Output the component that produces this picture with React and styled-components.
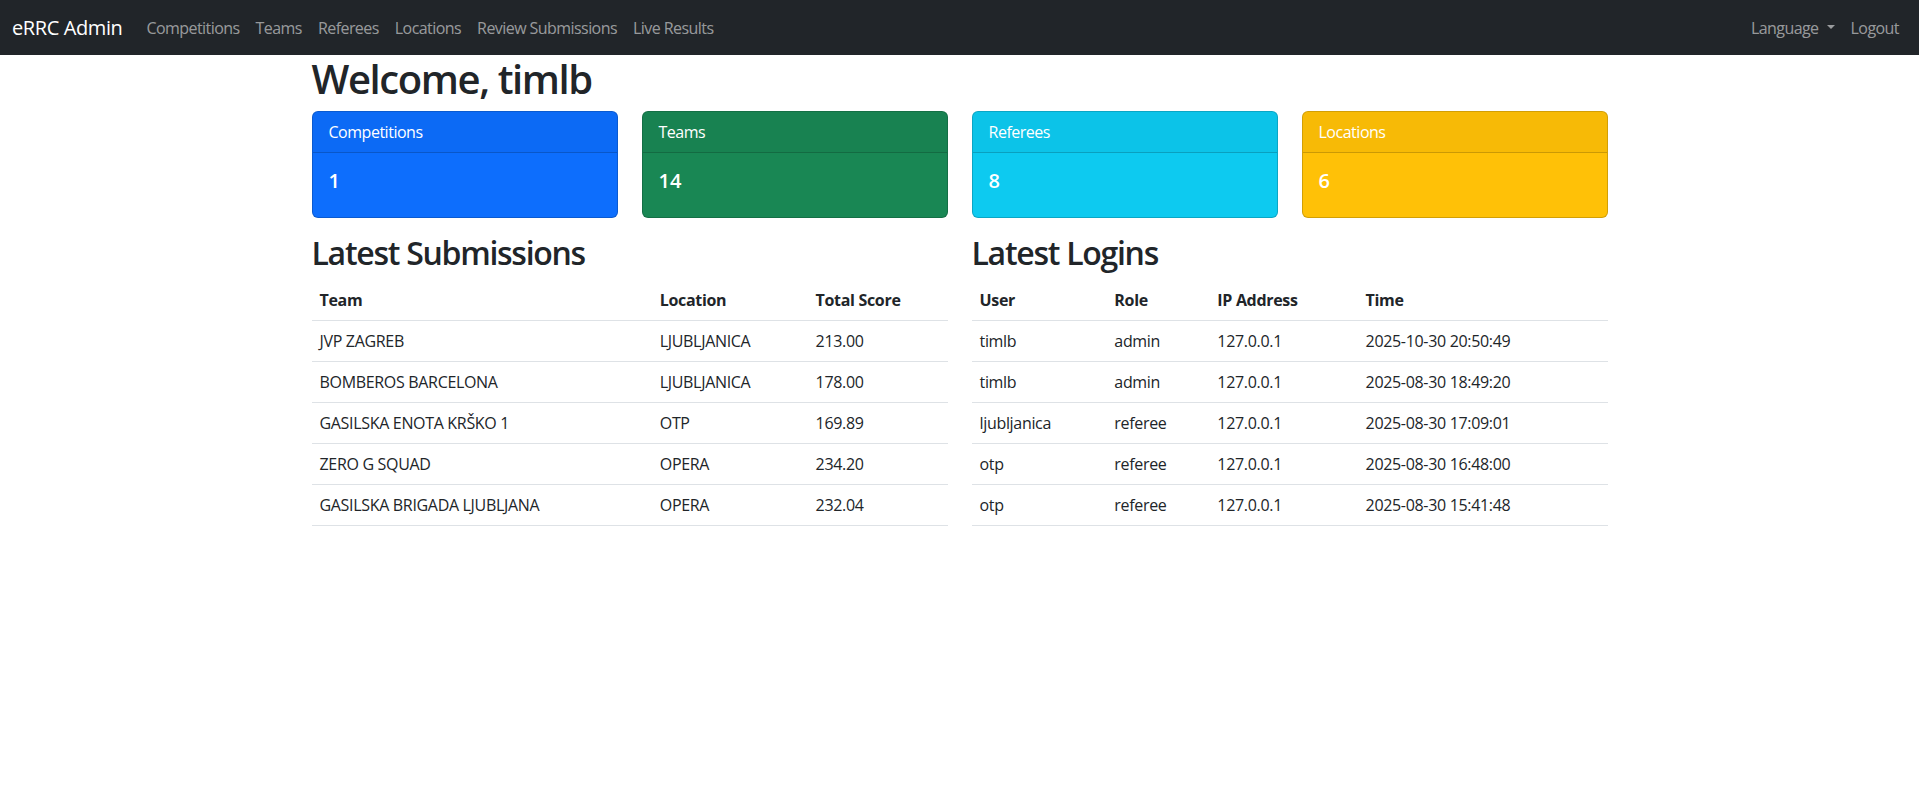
import React from 'react';
import styled, { createGlobalStyle } from 'styled-components';

const GlobalStyle = createGlobalStyle`
  *, *::before, *::after {
    box-sizing: border-box;
  }
  body {
    margin: 0;
    font-family: "Segoe UI", "Open Sans", "Noto Sans", sans-serif;
    font-size: 16px;
    line-height: 1.5;
    color: #212529;
    background: #fff;
  }
`

const Navbar = styled.nav`
  display: flex;
  align-items: center;
  justify-content: space-between;
  height: 55px;
  padding: 0 12px;
  background-color: #212529;
  letter-spacing: -0.035em;
`

const NavGroup = styled.div`
  display: flex;
  align-items: center;
`

const Brand = styled.a`
  font-size: 20px;
  line-height: 30px;
  color: #fff;
  margin-right: 16px;
  letter-spacing: -0.02em;
  text-decoration: none;
  cursor: pointer;
`

const NavLink = styled.a`
  padding: 8px;
  color: rgba(255, 255, 255, 0.55);
  text-decoration: none;
  cursor: pointer;

  &:hover {
    color: rgba(255, 255, 255, 0.75);
  }
`

const Dropdown = styled(NavLink)`
  &::after {
    content: '';
    display: inline-block;
    margin-left: 8px;
    vertical-align: 0.255em;
    border-top: 0.3em solid;
    border-right: 0.3em solid transparent;
    border-left: 0.3em solid transparent;
  }
`

const Container = styled.main`
  max-width: 1320px;
  margin: 0 auto;
  padding: 0 12px;
`

const Title = styled.h1`
  font-size: 40px;
  font-weight: 600;
  line-height: 1.2;
  letter-spacing: -0.035em;
  margin: 0 0 8px;
`

const CardRow = styled.div`
  display: grid;
  grid-template-columns: repeat(4, 1fr);
  gap: 24px;
`

const StatCard = styled.div`
  border: 1px solid rgba(0, 0, 0, 0.175);
  border-radius: 6px;
  background-color: ${p => p.$bg};
  color: #fff;
  overflow: hidden;
`

const CardHeader = styled.div`
  padding: 8px 16px;
  background-color: rgba(0, 0, 0, 0.03);
  border-bottom: 1px solid rgba(0, 0, 0, 0.175);
  letter-spacing: -0.03em;
`

const CardBody = styled.div`
  padding: 16px;
`

const Count = styled.h5`
  font-size: 20px;
  font-weight: 600;
  line-height: 1.2;
  margin: 0 0 8px;
`

const TableRow = styled.div`
  display: grid;
  grid-template-columns: 1fr 1fr;
  gap: 24px;
  margin-top: 16px;
`

const SectionTitle = styled.h2`
  font-size: 32px;
  font-weight: 600;
  line-height: 1.2;
  letter-spacing: -0.04em;
  margin: 0 0 8px;
`

const Table = styled.table`
  width: 100%;
  border-collapse: collapse;
  margin-bottom: 16px;
  letter-spacing: -0.02em;

  th, td {
    padding: 8px;
    text-align: left;
    border-bottom: 1px solid #dee2e6;
  }

  th {
    font-weight: 700;
  }
`

const Col = styled.th`
  width: ${p => p.$w};
`

const stats = [
  { label: 'Competitions', value: 1, bg: '#0d6efd' },
  { label: 'Teams', value: 14, bg: '#198754' },
  { label: 'Referees', value: 8, bg: '#0dcaf0' },
  { label: 'Locations', value: 6, bg: '#ffc107' },
]

const submissions = [
  ['JVP ZAGREB', 'LJUBLJANICA', '213.00'],
  ['BOMBEROS BARCELONA', 'LJUBLJANICA', '178.00'],
  ['GASILSKA ENOTA KRŠKO 1', 'OTP', '169.89'],
  ['ZERO G SQUAD', 'OPERA', '234.20'],
  ['GASILSKA BRIGADA LJUBLJANA', 'OPERA', '232.04'],
]

const logins = [
  ['timlb', 'admin', '127.0.0.1', '2025-10-30 20:50:49'],
  ['timlb', 'admin', '127.0.0.1', '2025-08-30 18:49:20'],
  ['ljubljanica', 'referee', '127.0.0.1', '2025-08-30 17:09:01'],
  ['otp', 'referee', '127.0.0.1', '2025-08-30 16:48:00'],
  ['otp', 'referee', '127.0.0.1', '2025-08-30 15:41:48'],
]

const App = () => {
  return (
    <>
      <GlobalStyle />
      <Navbar>
        <NavGroup>
          <Brand>eRRC Admin</Brand>
          <NavLink>Competitions</NavLink>
          <NavLink>Teams</NavLink>
          <NavLink>Referees</NavLink>
          <NavLink>Locations</NavLink>
          <NavLink>Review Submissions</NavLink>
          <NavLink>Live Results</NavLink>
        </NavGroup>
        <NavGroup>
          <Dropdown>Language</Dropdown>
          <NavLink>Logout</NavLink>
        </NavGroup>
      </Navbar>

      <Container>
        <Title>Welcome, timlb</Title>

        <CardRow>
          {stats.map(s => (
            <StatCard key={s.label} $bg={s.bg}>
              <CardHeader>{s.label}</CardHeader>
              <CardBody>
                <Count>{s.value}</Count>
              </CardBody>
            </StatCard>
          ))}
        </CardRow>

        <TableRow>
          <div>
            <SectionTitle>Latest Submissions</SectionTitle>
            <Table>
              <thead>
                <tr>
                  <Col $w="53.5%">Team</Col>
                  <Col $w="24.5%">Location</Col>
                  <Col>Total Score</Col>
                </tr>
              </thead>
              <tbody>
                {submissions.map((r, i) => (
                  <tr key={i}>
                    {r.map((c, j) => <td key={j}>{c}</td>)}
                  </tr>
                ))}
              </tbody>
            </Table>
          </div>

          <div>
            <SectionTitle>Latest Logins</SectionTitle>
            <Table>
              <thead>
                <tr>
                  <Col $w="21.2%">User</Col>
                  <Col $w="16.2%">Role</Col>
                  <Col $w="23.3%">IP Address</Col>
                  <Col>Time</Col>
                </tr>
              </thead>
              <tbody>
                {logins.map((r, i) => (
                  <tr key={i}>
                    {r.map((c, j) => <td key={j}>{c}</td>)}
                  </tr>
                ))}
              </tbody>
            </Table>
          </div>
        </TableRow>
      </Container>
    </>
  )
}

export default App
